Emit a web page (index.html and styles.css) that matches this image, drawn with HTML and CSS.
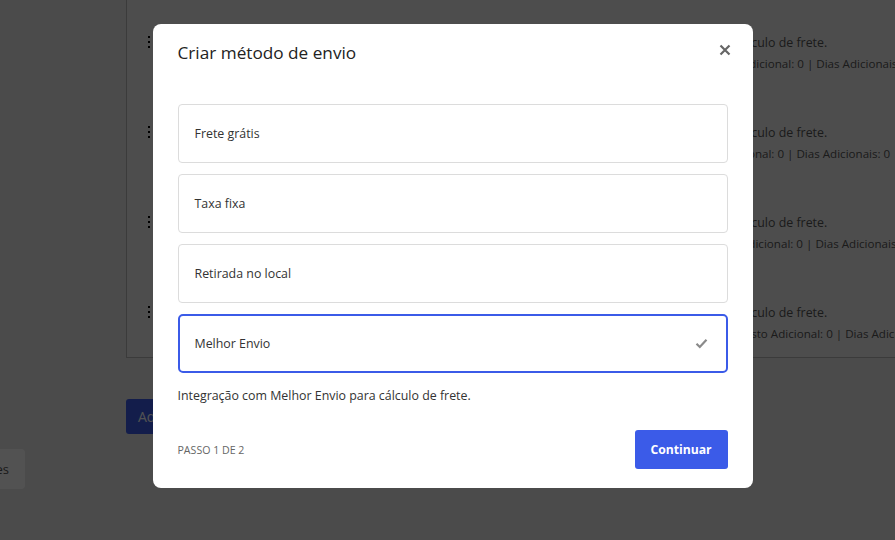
FILE: index.html
```html
<!DOCTYPE html>
<html lang="pt-BR">
<head>
<meta charset="utf-8">
<title>Métodos de envio</title>
<link rel="stylesheet" href="styles.css">
</head>
<body>
<div class="page">
  <aside class="side">
    <div class="side-btn">Opções</div>
  </aside>
  <main class="main">
    <section class="card">
      <div class="row">
        <span class="kebab"><svg width="4" height="14" viewBox="0 0 4 14"><rect x="1" y="0" width="2" height="2"/><rect x="1" y="5" width="2" height="2"/><rect x="1" y="10" width="2" height="2"/></svg></span>
        <div class="row-info">
          <div class="info-desc">Integração com Melhor Envio para cálculo de frete.</div>
          <div class="info-meta">Serviços: Correios SEDEX Hoje | Custo Adicional: 0 | Dias Adicionais: 0</div>
        </div>
      </div>
      <div class="row">
        <span class="kebab"><svg width="4" height="14" viewBox="0 0 4 14"><rect x="1" y="0" width="2" height="2"/><rect x="1" y="5" width="2" height="2"/><rect x="1" y="10" width="2" height="2"/></svg></span>
        <div class="row-info">
          <div class="info-desc">Integração com Melhor Envio para cálculo de frete.</div>
          <div class="info-meta">Serviço: Correios PAC Mini | Custo Adicional: 0 | Dias Adicionais: 0</div>
        </div>
      </div>
      <div class="row">
        <span class="kebab"><svg width="4" height="14" viewBox="0 0 4 14"><rect x="1" y="0" width="2" height="2"/><rect x="1" y="5" width="2" height="2"/><rect x="1" y="10" width="2" height="2"/></svg></span>
        <div class="row-info">
          <div class="info-desc">Integração com Melhor Envio para cálculo de frete.</div>
          <div class="info-meta">Serviço: Correios SEDEX 10 SP | Custo Adicional: 0 | Dias Adicionais: 0</div>
        </div>
      </div>
      <div class="row">
        <span class="kebab"><svg width="4" height="14" viewBox="0 0 4 14"><rect x="1" y="0" width="2" height="2"/><rect x="1" y="5" width="2" height="2"/><rect x="1" y="10" width="2" height="2"/></svg></span>
        <div class="row-info">
          <div class="info-desc">Integração com Melhor Envio para cálculo de frete.</div>
          <div class="info-meta">Serviço: Jadlog .Package Econômico | Custo Adicional: 0 | Dias Adicionais: 0</div>
        </div>
      </div>
    </section>
    <button class="add-btn" type="button">Adicionar método de envio</button>
  </main>
</div>

<div class="overlay">
  <div class="modal" role="dialog" aria-labelledby="modal-title">
    <header class="modal-header">
      <h2 id="modal-title" class="modal-title">Criar método de envio</h2>
      <button class="close-btn" type="button" aria-label="Fechar">
        <svg width="12" height="12" viewBox="0 0 12 12"><path d="M1.5 1.5 L10.5 10.5 M10.5 1.5 L1.5 10.5" stroke="currentColor" stroke-width="2.2" stroke-linecap="butt"/></svg>
      </button>
    </header>
    <div class="modal-body">
      <ul class="options">
        <li class="option">Frete grátis</li>
        <li class="option">Taxa fixa</li>
        <li class="option">Retirada no local</li>
        <li class="option option-selected">
          <span>Melhor Envio</span>
          <svg class="check" width="13" height="11" viewBox="0 0 13 11"><path d="M1.5 5.8 L4.8 9 L11.5 1.8" fill="none" stroke="currentColor" stroke-width="2.2"/></svg>
        </li>
      </ul>
      <p class="option-desc">Integração com Melhor Envio para cálculo de frete.</p>
    </div>
    <footer class="modal-footer">
      <span class="step">Passo 1 de 2</span>
      <button class="primary-btn" type="button">Continuar</button>
    </footer>
  </div>
</div>
</body>
</html>
```

FILE: styles.css
```css
* {
  box-sizing: border-box;
}

html, body {
  margin: 0;
  height: 100%;
  overflow: hidden;
}

body {
  font-family: "Open Sans", "Noto Sans", sans-serif;
  font-size: 12.4px;
  color: #333;
  background: #e8e8e8;
}

/* page behind the dialog */
.page {
  display: flex;
  height: 100%;
}

.side {
  width: 126px;
  flex: none;
  padding-top: 449px;
}

.side-btn {
  margin-left: -60px;
  width: 85px;
  height: 40px;
  background: #fff;
  border-radius: 4px;
  display: flex;
  align-items: center;
  justify-content: flex-end;
  padding-right: 16px;
  color: #555;
  font-size: 13px;
}

.main {
  flex: none;
  width: 900px;
}

.card {
  margin-top: -4px;
  background: #f0f0f0;
  border: 1px solid #b8b8b8;
  border-right: none;
}

.row {
  height: 90px;
  display: flex;
  align-items: flex-start;
  padding-top: 35px;
}

.kebab {
  width: 44px;
  height: 21px;
  display: flex;
  align-items: center;
  justify-content: center;
  color: #000;
}

.kebab svg {
  fill: currentColor;
}

.row-info {
  margin-left: 363px;
  line-height: 21px;
  white-space: nowrap;
}

.info-desc {
  color: #555;
}

.info-meta {
  color: #555;
  font-size: 11.6px;
}

.add-btn {
  margin-top: 41px;
  height: 35px;
  padding: 0 12px;
  border: none;
  border-radius: 3px;
  background: #3b5be8;
  color: #fff;
  font: inherit;
  font-size: 14px;
}

/* dialog */
.overlay {
  position: fixed;
  inset: 0;
  background: rgba(0, 0, 0, 0.68);
  display: flex;
  justify-content: center;
  align-items: flex-start;
  padding: 24px 0 0 10px;
}

.modal {
  width: 600px;
  background: #fff;
  border-radius: 8px;
}

.modal-header {
  display: flex;
  align-items: center;
  justify-content: space-between;
  padding: 16px 22px 0 25px;
}

.modal-title {
  margin: 0;
  font-size: 17.2px;
  font-weight: 400;
  line-height: 25px;
  color: #222;
}

.close-btn {
  border: none;
  background: none;
  padding: 0;
  width: 12px;
  height: 12px;
  margin-top: -5px;
  color: #666;
  display: flex;
}

.modal-body {
  padding: 39px 25px 0;
}

.options {
  list-style: none;
  margin: 0;
  padding: 0;
  display: flex;
  flex-direction: column;
  gap: 11px;
}

.option {
  height: 59px;
  border: 1px solid #dcdcdc;
  border-radius: 4px;
  padding: 0 16px;
  display: flex;
  align-items: center;
  justify-content: space-between;
  color: #333;
}

.option-selected {
  border: 2px solid #3b5be8;
  border-radius: 5px;
  padding: 0 15px;
}

.check {
  color: #8a8a8a;
  margin-right: 3px;
}

.option-desc {
  margin: 13px 0 0;
  line-height: 20px;
  color: #333;
}

.modal-footer {
  display: flex;
  align-items: center;
  justify-content: space-between;
  padding: 24px 25px 19px;
}

.step {
  text-transform: uppercase;
  font-size: 10.6px;
  color: #666;
}

.primary-btn {
  width: 93px;
  height: 39px;
  border: none;
  border-radius: 3px;
  background: #3b5be8;
  color: #fff;
  font: inherit;
  font-size: 12.2px;
  font-weight: 700;
}
```
